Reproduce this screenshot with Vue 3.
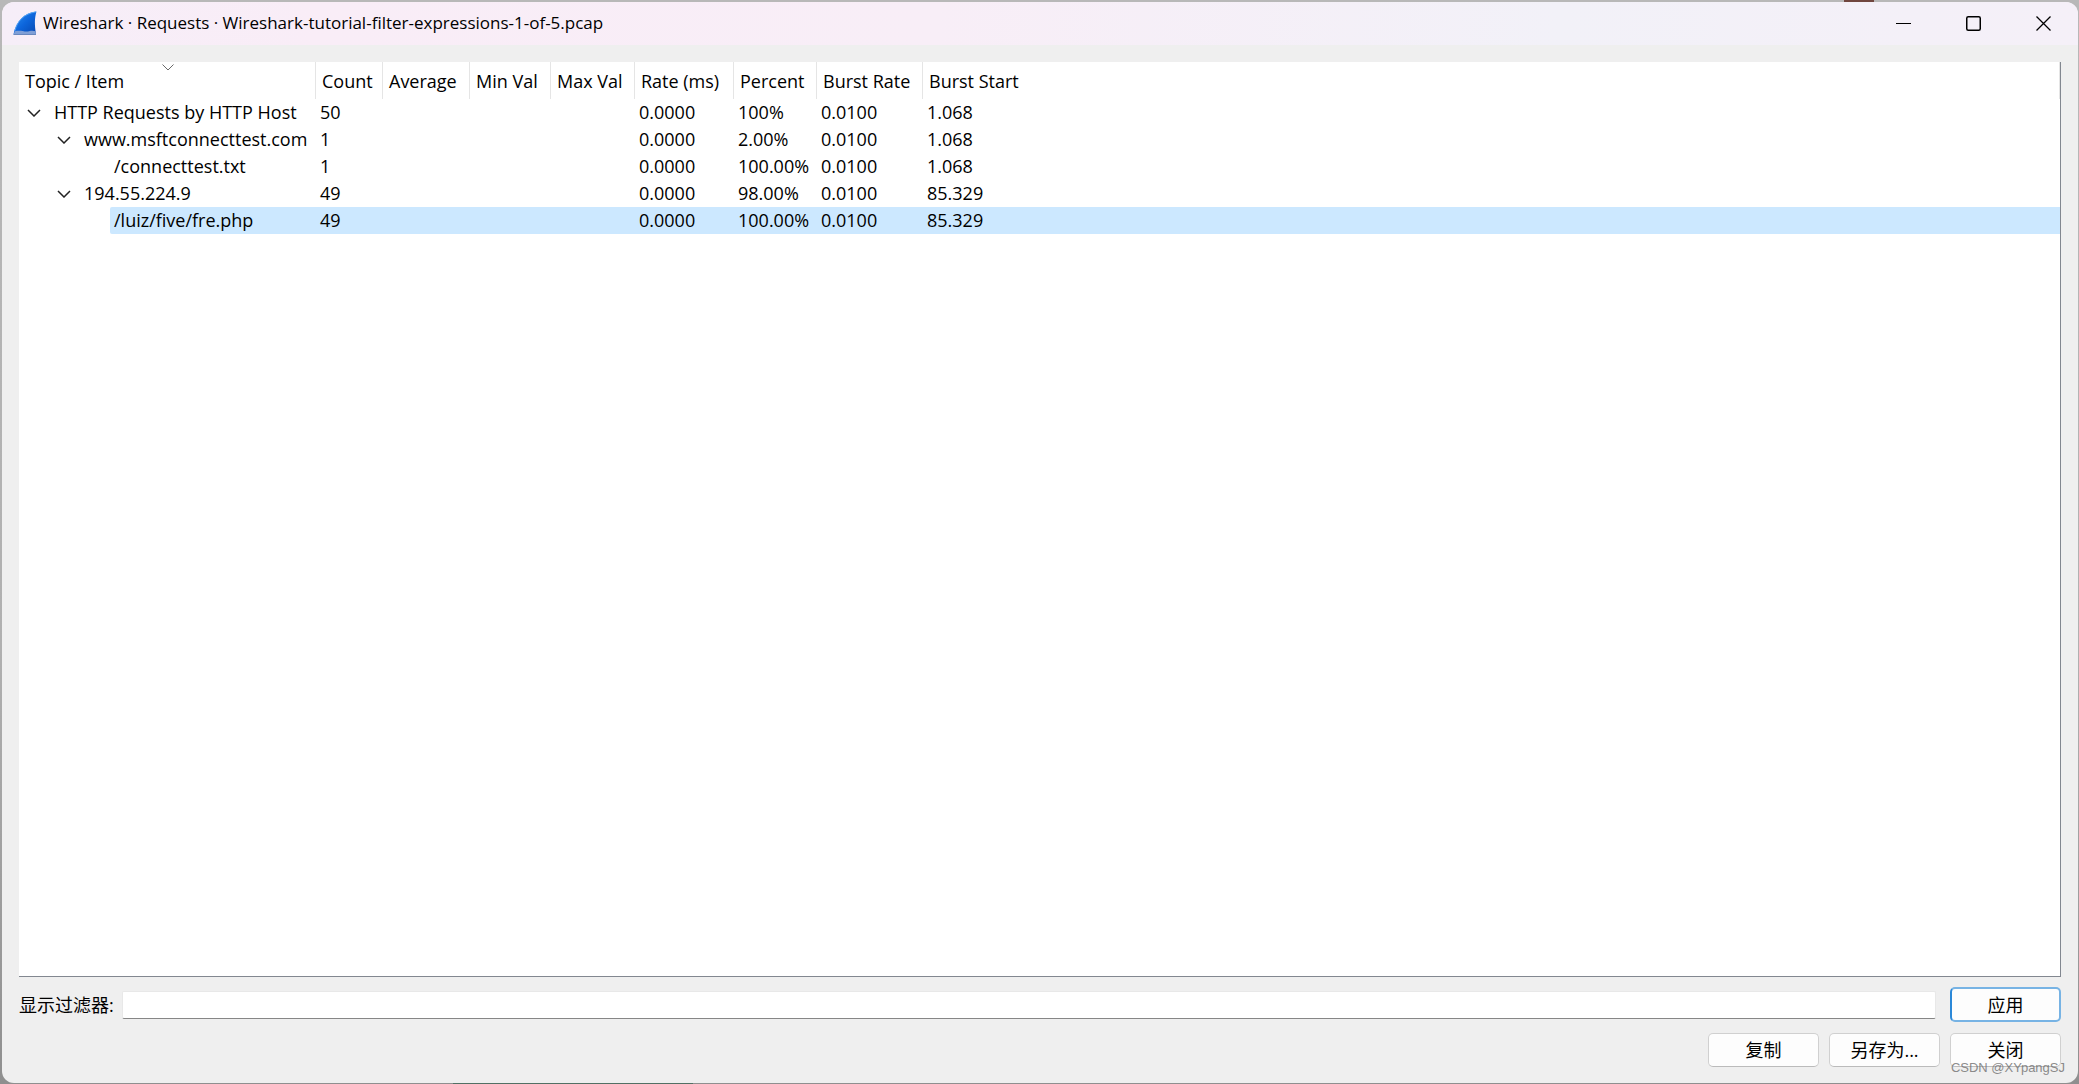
<script setup>
import { ref } from 'vue'

const filter = ref('')

const columns = [
  { label: 'Topic / Item', width: 297, sorted: true },
  { label: 'Count', width: 67 },
  { label: 'Average', width: 87 },
  { label: 'Min Val', width: 81 },
  { label: 'Max Val', width: 84 },
  { label: 'Rate (ms)', width: 99 },
  { label: 'Percent', width: 83 },
  { label: 'Burst Rate', width: 106 },
  { label: 'Burst Start', width: 0 },
]

const rows = [
  { topic: 'HTTP Requests by HTTP Host', level: 0, open: true, values: ['50', '', '', '', '0.0000', '100%', '0.0100', '1.068'] },
  { topic: 'www.msftconnecttest.com', level: 1, open: true, values: ['1', '', '', '', '0.0000', '2.00%', '0.0100', '1.068'] },
  { topic: '/connecttest.txt', level: 2, values: ['1', '', '', '', '0.0000', '100.00%', '0.0100', '1.068'] },
  { topic: '194.55.224.9', level: 1, open: true, values: ['49', '', '', '', '0.0000', '98.00%', '0.0100', '85.329'] },
  { topic: '/luiz/five/fre.php', level: 2, selected: true, values: ['49', '', '', '', '0.0000', '100.00%', '0.0100', '85.329'] },
]
</script>

<template>
  <div class="desktop">
    <div class="window">
      <header class="titlebar">
        <div class="caption">
          <svg class="logo" width="24" height="24" viewBox="0 0 24 28" preserveAspectRatio="none" aria-hidden="true">
            <defs>
              <linearGradient id="fin" x1="0" y1="0" x2="1" y2="1">
                <stop offset="0" stop-color="#2f93f2" />
                <stop offset="0.5" stop-color="#0d66dc" />
                <stop offset="1" stop-color="#0747b0" />
              </linearGradient>
            </defs>
            <path d="M0.500 27 C3 12 11 2 23.500 0.500 C21.500 8 21.500 16 23 27 Z" fill="url(#fin)" />
            <path d="M2 23 C4 12 11 3 23 1" fill="none" stroke="#5aa9f5" stroke-width="1" />
            <path d="M0.500 27 L2 23.500 C8 22 12 25 16 23.500 C19 22.500 21 23 22.500 23.500 L23 27 Z" fill="#7f9fd6" />
            <path d="M0.500 27.500 H23" stroke="#5e7fb8" />
          </svg>
          <h1>Wireshark · Requests · Wireshark-tutorial-filter-expressions-1-of-5.pcap</h1>
        </div>
        <nav class="controls">
          <button type="button" aria-label="Minimize">
            <svg width="15" height="15" viewBox="0 0 15 15"><path d="M0 7.500H15" stroke="#000" /></svg>
          </button>
          <button type="button" aria-label="Maximize">
            <svg width="15" height="15" viewBox="0 0 15 15"><rect x="0.750" y="0.750" width="13.500" height="13.500" rx="1.500" fill="none" stroke="#000" stroke-width="1.500" /></svg>
          </button>
          <button type="button" aria-label="Close">
            <svg width="15" height="15" viewBox="0 0 15 15"><path d="M0.500 0.500L14.500 14.500M14.500 0.500L0.500 14.500" stroke="#000" stroke-width="1.300" /></svg>
          </button>
        </nav>
      </header>

      <main class="content">
        <div class="tree">
          <table>
            <colgroup>
              <col v-for="c in columns" :key="c.label" :style="{ width: c.width ? c.width + 'px' : 'auto' }" />
            </colgroup>
            <thead>
              <tr>
                <th v-for="c in columns" :key="c.label" scope="col">
                  {{ c.label }}
                  <svg v-if="c.sorted" class="sort" width="12" height="7" viewBox="0 0 12 7"><path d="M0.500 0.500L6 6L11.500 0.500" fill="none" stroke="#6a6a6a" /></svg>
                </th>
              </tr>
            </thead>
            <tbody>
              <tr v-for="r in rows" :key="r.topic" :class="{ selected: r.selected }">
                <td class="topic">
                  <div :class="['branch', 'level-' + r.level]">
                    <svg v-if="r.open" class="chevron" width="14" height="8" viewBox="0 0 14 8"><path d="M1 1L7 7L13 1" fill="none" stroke="#222" stroke-width="1.500" /></svg>
                    <span class="name">{{ r.topic }}</span>
                  </div>
                </td>
                <td v-for="(v, i) in r.values" :key="i">{{ v }}</td>
              </tr>
            </tbody>
          </table>
        </div>

        <form class="filter" @submit.prevent>
          <label for="display-filter">显示过滤器:</label>
          <input id="display-filter" v-model="filter" type="text" />
          <button type="submit" class="push default">应用</button>
        </form>

        <div class="actions">
          <button type="button" class="push">复制</button>
          <button type="button" class="push">另存为...</button>
          <button type="button" class="push">关闭</button>
        </div>
      </main>
    </div>
    <span class="watermark">CSDN @XYpangSJ</span>
  </div>
</template>

<style>
body {
  margin: 0;
}
</style>

<style scoped>
.desktop {
  position: relative;
  box-sizing: border-box;
  display: flex;
  min-height: 100vh;
  padding: 2px 1px 1px 2px;
  background:
    linear-gradient(#70463f, #70463f) 90% 0 / 30px 2px no-repeat,
    linear-gradient(#527064, #527064) 453px 100% / 240px 1px no-repeat,
    linear-gradient(#b8b8b8, #b0b0b0 60%, #8f8f8f);
  font-family: "Open Sans", "Noto Sans", "Noto Sans CJK SC", sans-serif;
  font-size: 18px;
  color: #000;
}

.window {
  flex: 1;
  display: flex;
  flex-direction: column;
  min-width: 0;
  overflow: hidden;
  border-radius: 12px;
  background: #efefef;
}

.titlebar {
  display: flex;
  align-items: center;
  height: 43px;
  background: linear-gradient(90deg, #f6eef8, #f9edf7 15%, #f8eef7 45%, #f2f1f8 75%, #f4f0f8 92%, #f5f0f8);
}

.caption {
  flex: 1;
  display: flex;
  align-items: center;
  padding-bottom: 2px;
}

.logo {
  margin: 0 6px 0 11px;
}

h1 {
  margin: 0;
  font-size: 17px;
  font-weight: 400;
  line-height: 24px;
  white-space: nowrap;
}

.controls {
  display: flex;
}

.controls button {
  display: flex;
  align-items: center;
  justify-content: center;
  width: 70px;
  height: 43px;
  padding: 0;
  border: 0;
  background: none;
}

.content {
  flex: 1;
  display: flex;
  flex-direction: column;
  padding: 17px 17px 16px;
}

.tree {
  flex: 1;
  border-right: 1px solid #828790;
  border-bottom: 1px solid #828790;
  background: #fff;
}

table {
  width: 100%;
  table-layout: fixed;
  border-collapse: separate;
  border-spacing: 0;
}

th {
  position: relative;
  height: 37px;
  padding: 0 0 0 6px;
  border-right: 1px solid #e5e5e5;
  font-weight: 400;
  text-align: left;
  white-space: nowrap;
}

.sort {
  position: absolute;
  top: 2px;
  left: calc(50% - 5px);
}

td {
  height: 27px;
  padding: 0 0 0 4px;
  line-height: 27px;
  white-space: nowrap;
}

.topic {
  padding: 0;
}

.branch {
  display: flex;
  align-items: center;
  height: 27px;
}

.level-0 {
  padding-left: 8px;
}

.level-1 {
  padding-left: 38px;
}

.level-2 {
  margin-left: 91px;
}

.chevron {
  flex: none;
  margin-right: 9px;
}

.name {
  padding-left: 4px;
}

.selected td:not(.topic),
.selected .branch {
  background: #cce8ff;
}

.selected .branch {
  border-radius: 2px 0 0 2px;
}

.filter {
  display: flex;
  align-items: center;
  margin-top: 10px;
}

label {
  line-height: 24px;
}

.filter input {
  flex: 1;
  box-sizing: border-box;
  height: 28px;
  margin: 0 14px 0 8px;
  padding: 0 6px;
  border: 1px solid #e8e8e8;
  border-bottom-color: #868686;
  border-radius: 2px;
  background: #fff;
  font: inherit;
  outline: none;
}

.push {
  box-sizing: border-box;
  width: 111px;
  height: 34px;
  padding: 0;
  border: 1px solid #d0d0d0;
  border-bottom-color: #bbb;
  border-radius: 5px;
  background: #fdfdfd;
  color: #000;
  font: inherit;
  line-height: 24px;
}

.default {
  height: 35px;
  border: 2px solid #77b3e4;
  border-left-color: #2b88d8;
}

.actions {
  display: flex;
  justify-content: flex-end;
  gap: 10px;
  margin-top: 11px;
}

.watermark {
  position: absolute;
  right: 14px;
  bottom: 8px;
  color: rgba(110, 110, 110, 0.8);
  font-family: "Liberation Sans", sans-serif;
  font-size: 13px;
  line-height: 16px;
}
</style>
